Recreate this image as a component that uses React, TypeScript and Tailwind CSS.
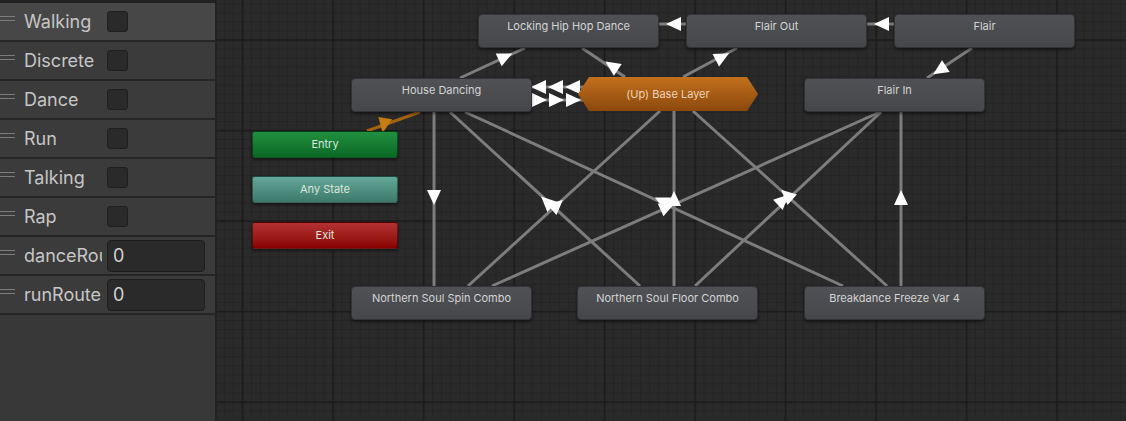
import React from 'react';

type Param = { name: string; kind: 'bool' | 'int'; active?: boolean };

const params: Param[] = [
  { name: 'Walking', kind: 'bool', active: true },
  { name: 'Discrete', kind: 'bool' },
  { name: 'Dance', kind: 'bool' },
  { name: 'Run', kind: 'bool' },
  { name: 'Talking', kind: 'bool' },
  { name: 'Rap', kind: 'bool' },
  { name: 'danceRoute', kind: 'int' },
  { name: 'runRoute', kind: 'int' },
];

// canvas starts at page x = 217, all coordinates below are page coordinates
const OX = 217;

const states = [
  { label: 'Locking Hip Hop Dance', x: 478, y: 14 },
  { label: 'Flair Out', x: 686, y: 14 },
  { label: 'Flair', x: 894, y: 14 },
  { label: 'House Dancing', x: 351, y: 78 },
  { label: 'Flair In', x: 804, y: 78 },
  { label: 'Northern Soul Spin Combo', x: 351, y: 286 },
  { label: 'Northern Soul Floor Combo', x: 577, y: 286 },
  { label: 'Breakdance Freeze Var 4', x: 804, y: 286 },
];

const links: [number, number, number, number][] = [
  [460, 78, 525, 48],
  [582, 48, 625, 77],
  [659, 24, 686, 24],
  [866, 24, 894, 24],
  [683, 77, 737, 48],
  [972, 48, 927, 78],
  [532, 87, 588, 87],
  [532, 100, 588, 100],
  [434, 112, 434, 286],
  [450, 112, 640, 286],
  [465, 112, 843, 286],
  [468, 286, 660, 111],
  [492, 286, 880, 112],
  [674, 111, 674, 286],
  [695, 286, 881, 112],
  [887, 286, 693, 111],
  [901, 112, 901, 286],
];

const arrows: [number, number, number][] = [
  [505, 57, -25],
  [612, 66, -146],
  [674, 24, 180],
  [882, 24, 180],
  [722, 57, -28],
  [940, 70, 147],
  [539, 87, 180],
  [556, 87, 180],
  [573, 87, 180],
  [539, 100, 0],
  [556, 100, 0],
  [573, 100, 0],
  [434, 197, 90],
  [547, 202, -137],
  [557, 205, -42],
  [662, 201, -155],
  [667, 207, -24],
  [674, 199, -90],
  [783, 200, -43],
  [787, 195, -138],
  [901, 198, -90],
];

const tri = (x: number, y: number, a: number) => {
  const r = (a * Math.PI) / 180;
  const c = Math.cos(r);
  const s = Math.sin(r);
  return [
    [8, 0],
    [-7, -7],
    [-7, 7],
  ]
    .map(([px, py]) => `${x + px * c - py * s},${y + px * s + py * c}`)
    .join(' ');
};

const Check = () => (
  <div className="w-[21px] h-[21px] rounded-[3px] bg-[#2a2a2a] border border-[#1f1f1f]" />
);

const Field = () => (
  <div className="w-[98px] h-[32px] rounded-[4px] bg-[#2a2a2a] border border-[#1d1d1d] pl-[5px] text-[18px] leading-[30px] text-[#d2d2d2]">
    0
  </div>
);

const ParamRow = ({ p }: { p: Param }) => (
  <div
    className={`relative flex items-center h-[39px] border-b-2 border-[#252525] ${
      p.active ? 'bg-[#474747]' : 'bg-[#3b3b3b]'
    }`}
  >
    <div className="absolute left-0 top-[13px] w-[15px] h-[5px] border-y border-[#7d7d7d]" />
    <div className="ml-[24px] w-[78px] overflow-hidden whitespace-nowrap text-[18px] text-[#c6c6c6]">
      {p.name}
    </div>
    <div className="ml-[5px]">{p.kind === 'bool' ? <Check /> : <Field />}</div>
  </div>
);

const StateNode = ({ label, x, y }: { label: string; x: number; y: number }) => (
  <div
    className="absolute w-[181px] h-[34px] rounded-[4px] border border-[#323336] bg-linear-to-b from-[#4f5155] to-[#45474b] shadow-[0_2px_3px_rgba(0,0,0,0.45)] pt-[3px] text-center text-[11px] leading-4 text-[#d4d4d4]"
    style={{ left: x - OX, top: y }}
  >
    {label}
  </div>
);

const SpecialNode = ({ label, y, tone }: { label: string; y: number; tone: string }) => (
  <div
    className={`absolute w-[146px] h-[27px] rounded-[3px] border border-black/40 shadow-[0_2px_3px_rgba(0,0,0,0.45)] flex items-center justify-center text-[11px] text-[#dbe6dd] ${tone}`}
    style={{ left: 252 - OX, top: y }}
  >
    {label}
  </div>
);

export default function App() {
  return (
    <div className="flex w-[1126px] h-[421px] overflow-hidden bg-[#2a2a2a] font-['Inter','Noto_Sans',sans-serif]">
      {/* Parameters list */}
      <div className="w-[217px] shrink-0 border-r-2 border-t-[3px] border-[#222222] bg-[#383838]">
        {params.map(p => (
          <ParamRow key={p.name} p={p} />
        ))}
      </div>

      {/* Graph canvas */}
      <div className="relative flex-1 overflow-hidden">
        <svg className="absolute inset-0" width={909} height={421} viewBox={`${OX} 0 909 421`}>
          <defs>
            <pattern id="minor" x={242} y={39.5} width={9.05} height={9.05} patternUnits="userSpaceOnUse">
              <rect x={0} y={0} width={1} height={9.05} fill="#242424" />
              <rect x={0} y={0} width={9.05} height={1} fill="#242424" />
            </pattern>
            <pattern id="major" x={241.8} y={39.3} width={90.5} height={90.5} patternUnits="userSpaceOnUse">
              <rect x={0} y={0} width={1.6} height={90.5} fill="#1b1b1b" />
              <rect x={0} y={0} width={90.5} height={1.6} fill="#1b1b1b" />
            </pattern>
          </defs>
          <rect x={OX} y={0} width={909} height={421} fill="#2a2a2a" />
          <rect x={OX} y={0} width={909} height={421} fill="url(#minor)" />
          <rect x={OX} y={0} width={909} height={421} fill="url(#major)" />

          {links.map(([x1, y1, x2, y2], i) => (
            <line key={i} x1={x1} y1={y1} x2={x2} y2={y2} stroke="#7d7d7d" strokeWidth={3} />
          ))}
          <line x1={367} y1={131} x2={420} y2={112} stroke="#a5620e" strokeWidth={3} />
          <polygon points={tri(384, 125, 100)} fill="#c47b12" />
          {arrows.map(([x, y, a], i) => (
            <polygon key={i} points={tri(x, y, a)} fill="#ffffff" />
          ))}
        </svg>

        {states.map(s => (
          <StateNode key={s.label} {...s} />
        ))}

        <div
          className="absolute w-[180px] h-[34px] bg-linear-to-b from-[#c4701d] to-[#8c490c] [clip-path:polygon(11px_0,169px_0,180px_17px,169px_34px,11px_34px,0_17px)] flex items-center justify-center text-[11px] text-[#ecd3ba]"
          style={{ left: 578 - OX, top: 77 }}
        >
          (Up) Base Layer
        </div>

        <SpecialNode label="Entry" y={131} tone="bg-linear-to-b from-[#21903f] to-[#0a6824]" />
        <SpecialNode label="Any State" y={176} tone="bg-linear-to-b from-[#62a898] to-[#3d796b]" />
        <SpecialNode label="Exit" y={222} tone="bg-linear-to-b from-[#b33131] to-[#890000]" />
      </div>
    </div>
  );
}
